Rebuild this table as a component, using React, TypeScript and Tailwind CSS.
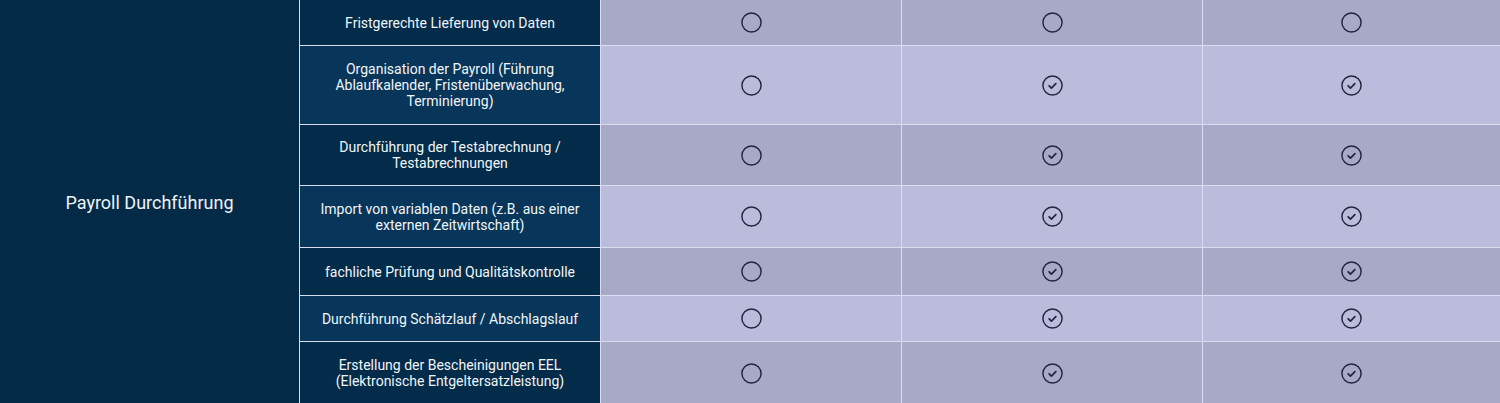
const rows = [
  { label: 'Fristgerechte Lieferung von Daten', h: 'h-[45px]', checks: [false, false, false] },
  { label: 'Organisation der Payroll (Führung Ablaufkalender, Fristenüberwachung, Terminierung)', h: 'h-[78px]', checks: [false, true, true] },
  { label: 'Durchführung der Testabrechnung / Testabrechnungen', h: 'h-[60px]', checks: [false, true, true] },
  { label: 'Import von variablen Daten (z.B. aus einer externen Zeitwirtschaft)', h: 'h-[61px]', checks: [false, true, true] },
  { label: 'fachliche Prüfung und Qualitätskontrolle', h: 'h-[47px]', checks: [false, true, true] },
  { label: 'Durchführung Schätzlauf / Abschlagslauf', h: 'h-[45px]', checks: [false, true, true] },
  { label: 'Erstellung der Bescheinigungen EEL (Elektronische Entgeltersatzleistung)', h: 'h-[62px]', checks: [false, true, true] },
];

const StatusIcon = ({ checked }: { checked: boolean }) => (
  <svg width="23" height="23" viewBox="0 0 24 24" fill="none" stroke="#23253c" strokeWidth="1.5" strokeLinecap="round" strokeLinejoin="round">
    <circle cx="12" cy="12" r="10" />
    {checked && <path d="m8.5 12.3 2.4 2.4 4.6-4.6" strokeWidth="1.8" />}
  </svg>
);

export default function App() {
  return (
    <div className="w-[1500px] h-[403px] overflow-hidden bg-[#dcdcf0] font-['Roboto',sans-serif]">
      <div className="grid grid-cols-[299px_300px_300px_300px_1fr] gap-px">
        <div className="row-span-7 bg-[#032b48] flex items-center justify-center text-[18px] text-[#eef3f8]">
          Payroll Durchführung
        </div>
        {rows.map((row, i) => {
          const even = i % 2 === 1;
          return (
            <div key={i} className="contents">
              <div
                className={`${row.h} flex items-center justify-center px-4 text-center text-[14px] leading-4 text-[#f1f5f9] ${
                  even ? 'bg-[#08355a]' : 'bg-[#032b4a]'
                }`}
              >
                {row.label}
              </div>
              {row.checks.map((c, j) => (
                <div
                  key={j}
                  className={`flex items-center justify-center ${even ? 'bg-[#bbbbdc]' : 'bg-[#a8a8c7]'}`}
                >
                  <StatusIcon checked={c} />
                </div>
              ))}
            </div>
          );
        })}
      </div>
    </div>
  );
}
